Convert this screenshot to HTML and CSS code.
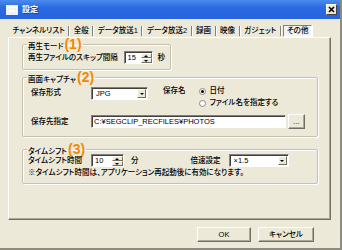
FILE: index.html
```html
<!DOCTYPE html>
<html lang="ja">
<head>
    <meta charset="UTF-8">
    <title>設定</title>
    <link rel="stylesheet" href="styles.css">
</head>
<body>
    <div class="window">
        <div class="titlebar">
            <svg class="app-icon" width="12" height="10" viewBox="0 0 12 10">
                <rect x="0.5" y="0.5" width="11" height="9" fill="#fff" stroke="#e8eefa"/>
                <rect x="1" y="1" width="10" height="2" fill="#fff"/>
                <rect x="2" y="4" width="8" height="4" fill="#fff" stroke="#c9d7f2" stroke-width="0.6"/>
            </svg>
            <span class="title">設定</span>
            <span class="close">
                <svg width="7" height="7" viewBox="0 0 7 7">
                    <path d="M1 1 L6 6 M6 1 L1 6" stroke="#000" stroke-width="1.6"/>
                </svg>
            </span>
        </div>

        <div class="tabs">
            <span class="tab">チャンネルリスト</span>
            <span class="tab">全般</span>
            <span class="tab">データ放送1</span>
            <span class="tab">データ放送2</span>
            <span class="tab">録画</span>
            <span class="tab">映像</span>
            <span class="tab">ガジェット</span>
            <span class="tab active">その他</span>
        </div>

        <div class="panel">
            <fieldset class="group group-play">
                <legend>再生モード<span class="num">(1)</span></legend>
                <div class="row">
                    <span class="label skip-label">再生ファイルのスキップ間隔</span>
                    <span class="spin skip-spin">
                        <span class="spin-val">15</span>
                        <span class="spin-btns"><i class="up"></i><i class="down"></i></span>
                    </span>
                    <span class="unit">秒</span>
                </div>
            </fieldset>

            <fieldset class="group group-capture">
                <legend>画面キャプチャ<span class="num">(2)</span></legend>
                <div class="row capture-row">
                    <span class="label form-label">保存形式</span>
                    <span class="select format-select">
                        <span class="select-val">JPG</span>
                        <span class="select-btn"><i></i></span>
                    </span>
                    <span class="label name-label">保存名</span>
                    <div class="radios">
                        <div class="radio checked"><span class="dot"></span>日付</div>
                        <div class="radio"><span class="dot"></span>ファイル名を指定する</div>
                    </div>
                </div>
                <div class="row path-row">
                    <span class="label form-label">保存先指定</span>
                    <span class="textbox path-box">C:¥SEGCLIP_RECFILES¥PHOTOS</span>
                    <button class="browse">...</button>
                </div>
            </fieldset>

            <fieldset class="group group-shift">
                <legend>タイムシフト<span class="num">(3)</span></legend>
                <div class="row">
                    <span class="label shift-label">タイムシフト時間</span>
                    <span class="spin shift-spin">
                        <span class="spin-val">10</span>
                        <span class="spin-btns"><i class="up"></i><i class="down"></i></span>
                    </span>
                    <span class="unit">分</span>
                    <span class="label speed-label">倍速設定</span>
                    <span class="select speed-select">
                        <span class="select-val">×1.5</span>
                        <span class="select-btn"><i></i></span>
                    </span>
                </div>
                <p class="note">※タイムシフト時間は、アプリケーション再起動後に有効になります。</p>
            </fieldset>
        </div>

        <div class="buttons">
            <button class="btn ok">OK</button>
            <button class="btn cancel">キャンセル</button>
        </div>
    </div>
</body>
</html>
```

FILE: styles.css
```css
body {
    margin: 0;
    padding: 0;
}
.window {
    width: 342px;
    height: 250px;
    box-sizing: border-box;
    background: #ece9d8;
    border-right: 2px solid #8e8c80;
    border-bottom: 2px solid #8e8c80;
    font-family: "Liberation Sans", "Noto Sans CJK JP", sans-serif;
    font-size: 7.5px;
    font-weight: 500;
    font-feature-settings: "palt";
    color: #000;
    line-height: 12px;
}

/* title bar */
.titlebar {
    height: 19px;
    display: flex;
    align-items: center;
    padding-left: 6px;
    background: linear-gradient(#4b8cf0, #2a6ae2 40%, #2663dc);
}
.app-icon {
    display: block;
}
.title {
    margin-left: 4px;
    color: #fff;
    font-weight: bold;
    font-size: 8px;
    text-shadow: 1px 1px 0 #1a3f9a;
}
.close {
    margin-left: auto;
    margin-right: 3px;
    width: 9px;
    height: 9px;
    display: flex;
    align-items: center;
    justify-content: center;
    background: #ece9d8;
    border: 1px solid;
    border-color: #fff #404040 #404040 #fff;
}
.close svg {
    display: block;
}

/* tabs */
.tabs {
    display: flex;
    align-items: center;
    height: 12px;
    margin-top: 6px;
    padding-left: 9px;
}
.tab {
    padding: 0 3.5px;
    line-height: 10px;
    border-right: 1px solid #808080;
    box-shadow: 1px 0 0 #fff;
    margin-right: 1px;
}
.tab.active {
    border: 1px solid #808080;
    border-right-color: #fff;
    border-bottom-color: #fff;
    background: #f4f3ee;
    padding: 0 3px;
    margin-left: 1px;
}

/* panel */
.panel {
    margin: 0 9px 0 8px;
    height: 183px;
    box-sizing: border-box;
    padding: 0 12px 0 13px;
    border: 1px solid;
    border-color: #fff #716f64 #716f64 #fff;
    box-shadow: inset -1px -1px 0 #aca899;
}
.group {
    margin: 0;
    padding: 0 5px 5px 5px;
    min-width: 0;
    border: 1px solid #c4c1b0;
    border-radius: 2px;
    box-shadow: inset 1px 1px 0 #fff, 1px 1px 0 #fff;
}
.group legend {
    padding: 0 1px;
    margin-left: -1px;
    height: 12px;
    line-height: 12px;
}
.num {
    font-family: "Liberation Sans", sans-serif;
    font-weight: bold;
    font-size: 14px;
    line-height: 12px;
    color: #f28a00;
    margin-left: 1px;
}
.group-play {
    width: 149px;
    box-sizing: border-box;
}
.group-capture {
    margin-top: 1px;
    padding-bottom: 7px;
}
.group-shift {
    margin-top: 6px;
}
.row {
    display: flex;
    align-items: center;
}
.group-play .row {
    margin-top: 1px;
}
.skip-label {
    width: 96px;
}
.unit {
    margin-left: 5px;
}

/* spin box */
.spin {
    display: flex;
    height: 13px;
    box-sizing: border-box;
    background: #fff;
    border: 1px solid;
    border-color: #808080 #fff #fff #808080;
    box-shadow: inset 1px 1px 0 #404040;
}
.spin-val {
    flex: 1;
    padding-left: 3px;
    line-height: 11px;
}
.spin-btns {
    width: 11px;
    display: flex;
    flex-direction: column;
    padding: 1px 0 0 0;
}
.spin-btns i {
    flex: 1;
    position: relative;
    background: #ece9d8;
    border: 1px solid;
    border-color: #fff #716f64 #716f64 #fff;
}
.spin-btns i::after {
    content: "";
    position: absolute;
    left: 2px;
    top: 1px;
    border-left: 2px solid transparent;
    border-right: 2px solid transparent;
}
.spin-btns .up::after {
    border-bottom: 2px solid #000;
}
.spin-btns .down::after {
    border-top: 2px solid #000;
}
.skip-spin {
    width: 29px;
}
.shift-spin {
    width: 33px;
}

/* drop-down */
.select {
    display: flex;
    height: 13px;
    box-sizing: border-box;
    background: #fff;
    border: 1px solid;
    border-color: #808080 #fff #fff #808080;
    box-shadow: inset 1px 1px 0 #404040;
    padding: 1px 1px 1px 1px;
}
.select-val {
    flex: 1;
    padding-left: 3px;
    line-height: 10px;
}
.select-btn {
    width: 9px;
    box-sizing: border-box;
    display: flex;
    align-items: center;
    justify-content: center;
    background: #ece9d8;
    border: 1px solid;
    border-color: #fff #716f64 #716f64 #fff;
}
.select-btn i {
    border-left: 2px solid transparent;
    border-right: 2px solid transparent;
    border-top: 2px solid #000;
}
.format-select {
    width: 57px;
}
.speed-select {
    width: 60px;
    margin-left: 8px;
}

/* capture group */
.capture-row {
    align-items: flex-start;
    margin-top: 2px;
}
.form-label {
    width: 60px;
    margin-left: 3px;
}
.capture-row .form-label,
.format-select {
    margin-top: 2px;
}
.name-label {
    margin-left: 15px;
}
.radios {
    margin-left: 13px;
}
.radio {
    display: flex;
    align-items: center;
    height: 12px;
}
.dot {
    width: 7px;
    height: 7px;
    box-sizing: border-box;
    border-radius: 50%;
    border: 1px solid #8e8c80;
    background: #fff;
    margin-right: 4px;
    display: flex;
    align-items: center;
    justify-content: center;
}
.radio.checked .dot::after {
    content: "";
    width: 3px;
    height: 3px;
    border-radius: 50%;
    background: #000;
}
.path-row {
    margin-top: 5px;
}
.textbox {
    height: 13px;
    box-sizing: border-box;
    background: #fff;
    border: 1px solid;
    border-color: #808080 #fff #fff #808080;
    box-shadow: inset 1px 1px 0 #404040;
    padding-left: 2px;
    line-height: 11px;
}
.path-box {
    width: 195px;
}
.browse {
    margin-left: 2px;
    width: 17px;
    height: 15px;
    padding: 0;
    font: inherit;
    line-height: 10px;
    background: #ece9d8;
    border: 1px solid;
    border-color: #fff #716f64 #716f64 #fff;
    box-shadow: inset -1px -1px 0 #aca899;
}

/* time shift group */
.group-shift .row {
    margin-top: -1px;
}
.shift-label {
    width: 63px;
}
.group-shift .unit {
    margin-left: 7px;
}
.speed-label {
    margin-left: 52px;
}
.note {
    margin: 1px 0 0 0;
    line-height: 10px;
}

/* dialog buttons */
.buttons {
    display: flex;
    justify-content: flex-end;
    gap: 7px;
    margin-top: 7px;
    padding-right: 26px;
}
.btn {
    height: 15px;
    padding: 0;
    font: inherit;
    line-height: 12px;
    background: #ece9d8;
    border: 1px solid;
    border-color: #fff #716f64 #716f64 #fff;
    box-shadow: inset -1px -1px 0 #aca899;
}
.ok {
    width: 54px;
}
.cancel {
    width: 56px;
}
```
